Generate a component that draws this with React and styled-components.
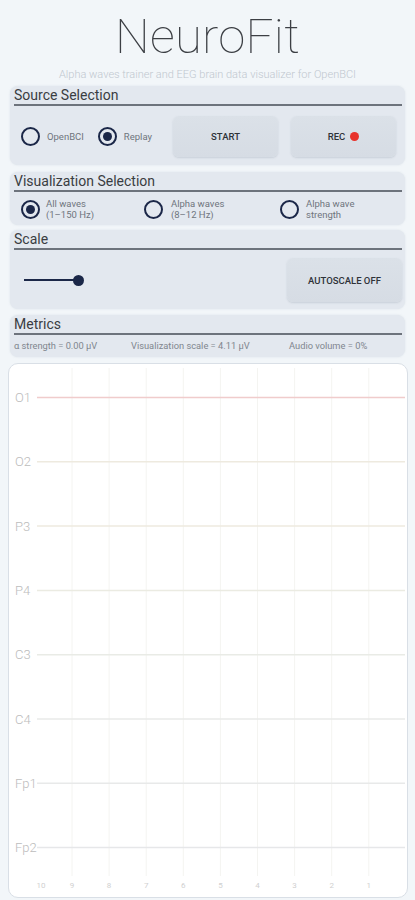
import React from "react";
import styled, { createGlobalStyle } from "styled-components";

const Global = createGlobalStyle`
  html, body { margin: 0; padding: 0; background: #f2f6f9; }
  body { font-family: Roboto, "Noto Sans", "Liberation Sans", sans-serif; }
  * { box-sizing: border-box; }
`;

const Page = styled.div`
  width: 415px;
  min-height: 900px;
  display: flex;
  flex-direction: column;
  background: #f2f6f9;
`;

const Title = styled.h1`
  margin: 7px 0 0;
  text-align: center;
  font-weight: 100;
  font-size: 49px;
  line-height: 60px;
  color: #3c3f44;
  letter-spacing: 0.3px;
`;

const Subtitle = styled.div`
  text-align: center;
  font-size: 11px;
  font-weight: 300;
  line-height: 14px;
  color: #c0c7cf;
  margin-top: 1px;
`;

const Panel = styled.section`
  margin: ${(p) => p.$mt || 6}px 10px 0 10px;
  background: #e3e8ef;
  border-radius: 8px;
  padding: 1px 3px 0 4px;
  box-shadow: 0 0 2px rgba(200, 210, 220, 0.6);
`;

const PanelHeader = styled.div`
  font-size: 14px;
  line-height: 17px;
  color: #3a3d42;
  border-bottom: 2px solid #6d737c;
`;

const SourceRow = styled.div`
  display: flex;
  align-items: center;
  padding: 10px 6px 8px 7px;
`;

const RadioGroup = styled.div`
  flex: 1;
  display: flex;
  align-items: center;
  gap: 14px;
`;

const RadioItem = styled.label`
  display: flex;
  align-items: center;
  gap: ${(p) => p.$gap || 7}px;
  font-size: 9.5px;
  line-height: 11px;
  color: #6f757d;
`;

const RadioCircle = styled.span`
  width: 19px;
  height: 19px;
  flex: none;
  border-radius: 50%;
  border: 2px solid #1b2748;
  display: flex;
  align-items: center;
  justify-content: center;
  &::after {
    content: "";
    width: 9px;
    height: 9px;
    border-radius: 50%;
    background: #1b2748;
    display: ${(p) => (p.$on ? "block" : "none")};
  }
`;

const ActionButton = styled.button`
  width: ${(p) => p.$w || 105}px;
  height: ${(p) => p.$h || 41}px;
  margin-left: ${(p) => p.$ml || 0}px;
  border: none;
  border-radius: 6px;
  background: linear-gradient(180deg, #dbe1e8 0%, #d6dce4 100%);
  box-shadow: 0 1px 2px rgba(150, 160, 175, 0.35);
  font-family: inherit;
  font-size: 9.5px;
  font-weight: 500;
  color: #2e3238;
  display: flex;
  align-items: center;
  justify-content: center;
  gap: 5px;
  padding: 0;
`;

const RecDot = styled.span`
  width: 9px;
  height: 9px;
  border-radius: 50%;
  background: #e8322b;
`;

const VisRow = styled.div`
  display: grid;
  grid-template-columns: 123px 136px 1fr;
  align-items: center;
  padding: 6px 0 5px 7px;
`;

const ScaleRow = styled.div`
  display: flex;
  align-items: center;
  padding: 8px 0 7px 10px;
`;

const SliderTrack = styled.div`
  flex: 1;
  height: 10px;
  display: flex;
  align-items: center;
`;

const SliderFill = styled.div`
  height: 2px;
  background: #1b2748;
`;

const SliderThumb = styled.div`
  width: 11px;
  height: 11px;
  margin-left: -5px;
  border-radius: 50%;
  background: #1b2748;
`;

const MetricsRow = styled.div`
  display: grid;
  grid-template-columns: 117px 158px 1fr;
  padding: 5px 0 5px 0;
  font-size: 9.3px;
  line-height: 12px;
  color: #80868e;
  white-space: nowrap;
`;

const ChartCard = styled.div`
  margin: 6px 7px 2px 8px;
  height: 535px;
  background: #ffffff;
  border: 1px solid #d9dfe6;
  border-radius: 10px;
  overflow: hidden;
`;

const channels = [
  { name: "O1", color: "#f0cccc" },
  { name: "O2", color: "#eeeadf" },
  { name: "P3", color: "#eeeadf" },
  { name: "P4", color: "#ebebe2" },
  { name: "C3", color: "#e9ebe6" },
  { name: "C4", color: "#e8eae8" },
  { name: "Fp1", color: "#e8e9e9" },
  { name: "Fp2", color: "#e6e7e9" },
];

function Chart() {
  const gridX = Array.from({ length: 9 }, (_, i) => 63 + i * 37.1);
  const axis = ["10", "9", "8", "7", "6", "5", "4", "3", "2", "1"];
  return (
    <svg width="398" height="533" viewBox="0 0 398 533">
      {gridX.map((x, i) => (
        <line key={i} x1={x} x2={x} y1="4" y2="512" stroke="#f4f4f1" strokeWidth="1" />
      ))}
      {channels.map((c, i) => {
        const y = 33.5 + i * 64.3;
        return (
          <g key={c.name}>
            <line x1="28" x2="396" y1={y} y2={y} stroke={c.color} strokeWidth="1.5" />
            <text x="6" y={y + 4.5} fontSize="13" fill="#bcbcbc" fontFamily="Roboto, sans-serif" fontWeight="300">
              {c.name}
            </text>
          </g>
        );
      })}
      {axis.map((t, i) => (
        <text
          key={t}
          x={i === 0 ? 32 : 63 + (i - 1) * 37.1}
          y="524"
          fontSize="8"
          textAnchor="middle"
          fill="#d0d0d0"
          fontFamily="Roboto, sans-serif"
        >
          {t}
        </text>
      ))}
    </svg>
  );
}

export default function App() {
  return (
    <Page>
      <Global />
      <Title>NeuroFit</Title>
      <Subtitle>Alpha waves trainer and EEG brain data visualizer for OpenBCI</Subtitle>

      <Panel $mt={4}>
        <PanelHeader>Source Selection</PanelHeader>
        <SourceRow>
          <RadioGroup>
            <RadioItem>
              <RadioCircle />
              OpenBCI
            </RadioItem>
            <RadioItem>
              <RadioCircle $on />
              Replay
            </RadioItem>
          </RadioGroup>
          <ActionButton>START</ActionButton>
          <ActionButton $ml={13}>
            REC <RecDot />
          </ActionButton>
        </SourceRow>
      </Panel>

      <Panel $mt={7}>
        <PanelHeader>Visualization Selection</PanelHeader>
        <VisRow>
          <RadioItem $gap={6}>
            <RadioCircle $on />
            <span>
              All waves
              <br />
              (1–150 Hz)
            </span>
          </RadioItem>
          <RadioItem $gap={8}>
            <RadioCircle />
            <span>
              Alpha waves
              <br />
              (8–12 Hz)
            </span>
          </RadioItem>
          <RadioItem $gap={7}>
            <RadioCircle />
            <span>
              Alpha wave
              <br />
              strength
            </span>
          </RadioItem>
        </VisRow>
      </Panel>

      <Panel $mt={5}>
        <PanelHeader>Scale</PanelHeader>
        <ScaleRow>
          <SliderTrack>
            <SliderFill style={{ width: "54px" }} />
            <SliderThumb />
          </SliderTrack>
          <ActionButton $w={115} $h={44}>AUTOSCALE OFF</ActionButton>
        </ScaleRow>
      </Panel>

      <Panel $mt={6}>
        <PanelHeader>Metrics</PanelHeader>
        <MetricsRow>
          <span>α strength = 0.00 µV</span>
          <span>Visualization scale = 4.11 µV</span>
          <span>Audio volume = 0%</span>
        </MetricsRow>
      </Panel>

      <ChartCard>
        <Chart />
      </ChartCard>
    </Page>
  );
}
